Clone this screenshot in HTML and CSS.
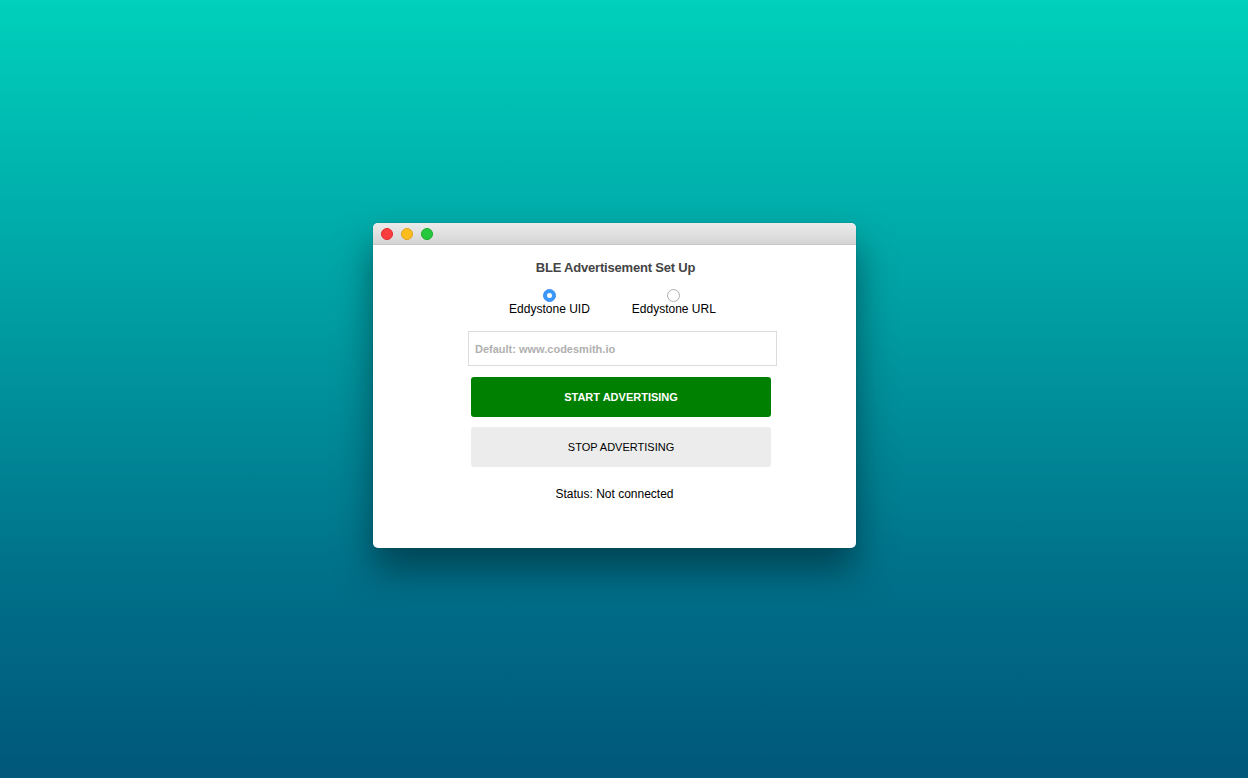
FILE: index.html
```html
<!DOCTYPE html>
<html>
<head>
<meta charset="utf-8">
<link rel="stylesheet" href="styles.css">
</head>
<body>
<div class="window">
  <div class="titlebar">
    <span class="light red"></span>
    <span class="light yellow"></span>
    <span class="light green"></span>
  </div>
  <div class="content">
    <h1 class="title">BLE Advertisement Set Up</h1>
    <div class="radios">
      <label class="radio-item">
        <span class="radio checked"></span>
        <span class="radio-label">Eddystone UID</span>
      </label>
      <label class="radio-item">
        <span class="radio"></span>
        <span class="radio-label">Eddystone URL</span>
      </label>
    </div>
    <div class="input-row">
      <div class="input"><span class="placeholder">Default: www.codesmith.io</span></div>
    </div>
    <div class="buttons">
      <div class="btn btn-start">START ADVERTISING</div>
      <div class="btn btn-stop">STOP ADVERTISING</div>
    </div>
    <p class="status">Status: Not connected</p>
  </div>
</div>
</body>
</html>
```

FILE: styles.css
```css
html, body {
  margin: 0;
  padding: 0;
}
body {
  width: 1248px;
  height: 778px;
  box-sizing: border-box;
  padding: 223px 0 0 373px;
  background: linear-gradient(to bottom, #00d0bc 0%, #009ea3 40%, #006f88 75%, #00577a 100%);
  font-family: "Liberation Sans", Arial, sans-serif;
  overflow: hidden;
}
.window {
  width: 483px;
  height: 325px;
  background: #fff;
  border-radius: 5px;
  overflow: hidden;
  box-shadow: 0 22px 36px rgba(0, 30, 40, 0.55), 0 0 0 1px rgba(0,0,0,0.05);
}
.titlebar {
  height: 22px;
  background: linear-gradient(to bottom, #ebebeb, #d5d5d5);
  border-bottom: 1px solid #c8c8c8;
  box-sizing: border-box;
  display: flex;
  align-items: center;
  padding-left: 8px;
  gap: 8px;
}
.light {
  width: 12px;
  height: 12px;
  border-radius: 50%;
  box-sizing: border-box;
}
.red { background: #fc3d3f; border: 0.5px solid #e0292b; }
.yellow { background: #fdbd1c; border: 0.5px solid #dea123; }
.green { background: #26c83f; border: 0.5px solid #1aab29; }
.content {
  display: flex;
  flex-direction: column;
  align-items: center;
  padding-top: 15px;
}
.title {
  margin: 0;
  font-size: 13px;
  line-height: 16px;
  font-weight: bold;
  color: #444;
  letter-spacing: -0.2px;
  margin-left: 2px;
}
.radios {
  display: flex;
  gap: 42px;
  margin-top: 13px;
  margin-left: -4px;
}
.radio-item {
  display: flex;
  flex-direction: column;
  align-items: center;
}
.radio {
  width: 13px;
  height: 13px;
  box-sizing: border-box;
  border-radius: 50%;
  border: 1px solid #b0b0b0;
  background: #fff;
  display: flex;
  align-items: center;
  justify-content: center;
}
.radio.checked {
  background: #3b99fc;
  border-color: #3b8ff0;
}
.radio.checked::after {
  content: "";
  width: 5px;
  height: 5px;
  border-radius: 50%;
  background: #fff;
}
.radio-label {
  font-size: 12px;
  line-height: 14px;
  color: #000;
}
.input-row {
  margin-top: 15px;
  margin-left: 16px;
}
.input {
  width: 309px;
  height: 35px;
  box-sizing: border-box;
  border: 1px solid #dcdcdc;
  display: flex;
  align-items: center;
  padding-left: 6px;
}
.placeholder {
  font-size: 11px;
  font-weight: bold;
  color: #b0b0b0;
}
.buttons {
  margin-top: 11px;
  margin-left: 13px;
  display: flex;
  flex-direction: column;
  gap: 10px;
}
.btn {
  width: 300px;
  height: 40px;
  border-radius: 3px;
  display: flex;
  align-items: center;
  justify-content: center;
  font-size: 11px;
}
.btn-start {
  background: #008000;
  color: #fff;
  font-weight: bold;
}
.btn-stop {
  background: #ececec;
  color: #000;
}
.status {
  margin: 20px 0 0 0;
  font-size: 12px;
  line-height: 14px;
  color: #000;
}
```
